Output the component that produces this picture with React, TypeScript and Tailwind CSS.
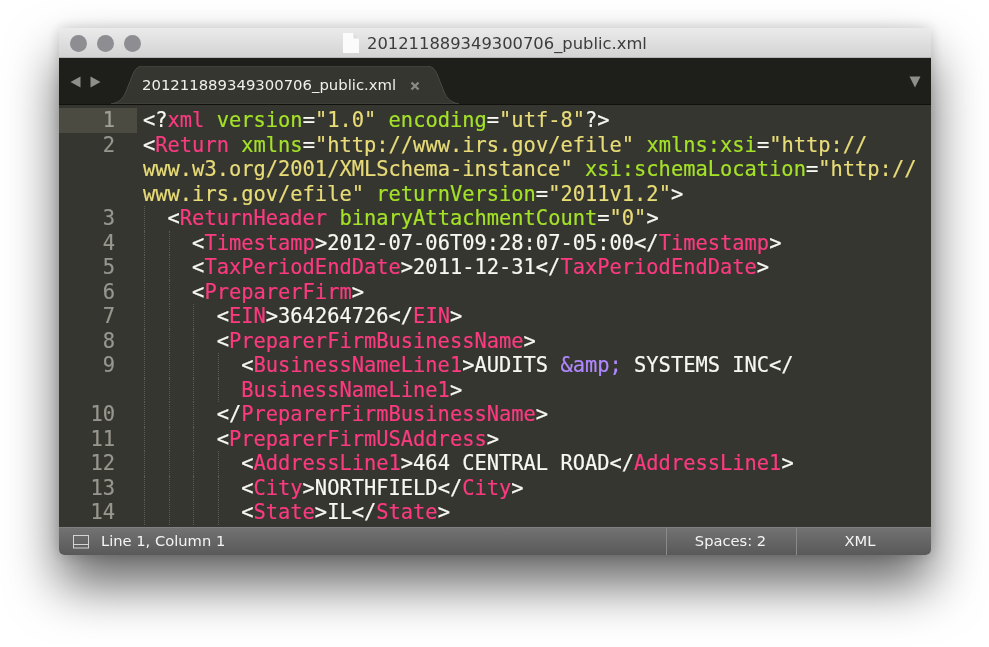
const mono = "font-['DejaVu_Sans_Mono',monospace]";

type Tok = [string, string?];

const P = "text-[#fb3a80]";
const G = "text-[#a4e228]";
const Y = "text-[#e8dc78]";
const V = "text-[#b088ff]";

function tag(name: string, close = false): Tok[] {
  return [[close ? "</" : "<"], [name, P], [">"]];
}

const rows: { n?: number; depth: number; guides: number; toks: Tok[] }[] = [
  { n: 1, depth: 0, guides: 0, toks: [["<?"], ["xml", P], [" "], ["version", G], ["="], ['"1.0"', Y], [" "], ["encoding", G], ["="], ['"utf-8"', Y], ["?>"]] },
  { n: 2, depth: 0, guides: 0, toks: [["<"], ["Return", P], [" "], ["xmlns", G], ["="], ['"http://www.irs.gov/efile"', Y], [" "], ["xmlns:xsi", G], ["="], ['"http://', Y]] },
  { depth: 0, guides: 0, toks: [["www.w3.org/2001/XMLSchema-instance\"", Y], [" "], ["xsi:schemaLocation", G], ["="], ['"http://', Y]] },
  { depth: 0, guides: 0, toks: [['www.irs.gov/efile"', Y], [" "], ["returnVersion", G], ["="], ['"2011v1.2"', Y], [">"]] },
  { n: 3, depth: 1, guides: 1, toks: [["<"], ["ReturnHeader", P], [" "], ["binaryAttachmentCount", G], ["="], ['"0"', Y], [">"]] },
  { n: 4, depth: 2, guides: 2, toks: [...tag("Timestamp"), ["2012-07-06T09:28:07-05:00"], ...tag("Timestamp", true)] },
  { n: 5, depth: 2, guides: 2, toks: [...tag("TaxPeriodEndDate"), ["2011-12-31"], ...tag("TaxPeriodEndDate", true)] },
  { n: 6, depth: 2, guides: 2, toks: tag("PreparerFirm") },
  { n: 7, depth: 3, guides: 3, toks: [...tag("EIN"), ["364264726"], ...tag("EIN", true)] },
  { n: 8, depth: 3, guides: 3, toks: tag("PreparerFirmBusinessName") },
  { n: 9, depth: 4, guides: 4, toks: [["<"], ["BusinessNameLine1", P], [">AUDITS "], ["&amp;", V], [" SYSTEMS INC</"]] },
  { depth: 4, guides: 4, toks: [["BusinessNameLine1", P], [">"]] },
  { n: 10, depth: 3, guides: 3, toks: tag("PreparerFirmBusinessName", true) },
  { n: 11, depth: 3, guides: 3, toks: tag("PreparerFirmUSAddress") },
  { n: 12, depth: 4, guides: 4, toks: [...tag("AddressLine1"), ["464 CENTRAL ROAD"], ...tag("AddressLine1", true)] },
  { n: 13, depth: 4, guides: 4, toks: [...tag("City"), ["NORTHFIELD"], ...tag("City", true)] },
  { n: 14, depth: 4, guides: 4, toks: [...tag("State"), ["IL"], ...tag("State", true)] },
];

function Row({ row }: { row: (typeof rows)[number] }) {
  const active = row.n === 1;
  return (
    <div className="flex h-[24.5px] leading-[24.5px] shrink-0">
      <div className={`w-[78px] shrink-0 pr-[22px] text-right ${active ? "bg-[#4b4b41] text-[#a0a098]" : "text-[#97978f]"}`}>
        {row.n}
      </div>
      <div className="w-[6px] shrink-0" />
      <div className="flex">
        {Array.from({ length: row.depth }).map((_, i) => (
          <span key={i} className="w-[24.56px] h-full shrink-0 pl-px">
            {i < row.guides && <span className="block h-full border-l border-dotted border-[#5c5c54]" />}
          </span>
        ))}
        <span className="whitespace-pre text-[#f8f8f2]">
          {row.toks.map(([t, c], i) => (
            <span key={i} className={c}>{t}</span>
          ))}
        </span>
      </div>
    </div>
  );
}

export default function App() {
  return (
    <div className="w-[989px] h-[647px] bg-white overflow-hidden pt-[28px] pl-[59px]">
      <div className="w-[872px] h-[527px] flex flex-col rounded-[5px] overflow-hidden blur-[0.35px] shadow-[0_30px_52px_rgba(0,0,0,0.6),0_0_14px_rgba(0,0,0,0.18)]">
        {/* title bar */}
        <div className="h-[30px] shrink-0 flex items-center pl-[11px] pt-[2px] bg-gradient-to-b from-[#ebebeb] to-[#d3d3d3] border-b border-[#b5b5b5]">
          <div className="flex gap-[10px] -mt-[1px]">
            <span className="w-[17px] h-[17px] rounded-full bg-[#8e8e92]" />
            <span className="w-[17px] h-[17px] rounded-full bg-[#8e8e92]" />
            <span className="w-[17px] h-[17px] rounded-full bg-[#8e8e92]" />
          </div>
          <svg width="16" height="20" viewBox="0 0 16 20" className="ml-[202px] shrink-0 -mt-[1px]">
            <path d="M0 0H10.5L16 5.5V20H0Z" fill="#fbfbfb" />
            <path d="M10.5 0V5.5H16Z" fill="#dddddd" />
          </svg>
          <span className="ml-[8px] mt-[2px] font-['DejaVu_Sans',sans-serif] text-[16.35px] text-[#3c3c3c] whitespace-nowrap">
            201211889349300706_public.xml
          </span>
        </div>

        {/* tab bar */}
        <div className="h-[47px] shrink-0 flex items-end bg-[#1e1f1a] border-b border-[#11110e]">
          <div className="w-[52px] h-full shrink-0 flex items-center pl-[11px] pt-[2px] gap-[9px] text-[#8f8f8a]">
            <svg width="11" height="12" viewBox="0 0 11 12"><path d="M10.5 0.5V11.5L0.5 6Z" fill="currentColor" /></svg>
            <svg width="11" height="12" viewBox="0 0 11 12"><path d="M0.5 0.5V11.5L10.5 6Z" fill="currentColor" /></svg>
          </div>
          <div className="relative w-[348px] h-[38px] shrink-0 flex items-center pl-[31px]">
            <svg width="348" height="38" viewBox="0 0 348 38" className="absolute inset-0">
              <path d="M0 38C10 36 13 31 16 23L22 8C24 3 27 0 33 0H315C321 0 324 3 326 8L332 23C335 31 338 36 348 38Z" fill="#363630" stroke="#4a4a44" />
            </svg>
            <span className="relative font-['DejaVu_Sans',sans-serif] text-[14.85px] text-[#f0f0ea] whitespace-nowrap">
              201211889349300706_public.xml
            </span>
            <svg width="10" height="10" viewBox="0 0 10 10" className="relative ml-[14px] mt-[1px]">
              <path d="M1.5 1.5L8.5 8.5M8.5 1.5L1.5 8.5" stroke="#8a8a85" strokeWidth="2.4" />
            </svg>
          </div>
          <div className="flex-1 h-full flex items-center justify-end pr-[10px] pt-[2px]">
            <svg width="12" height="12" viewBox="0 0 12 12"><path d="M0.5 0.5H11.5L6 11.5Z" fill="#8f8f8a" /></svg>
          </div>
        </div>

        {/* editor */}
        <div className={`flex-1 min-h-0 overflow-hidden bg-[#363630] pt-[3px] text-[20.4px] [-webkit-text-stroke:0.2px] ${mono}`}>
          {rows.map((row, i) => (
            <Row key={i} row={row} />
          ))}
        </div>

        {/* status bar */}
        <div className="h-[28px] shrink-0 flex items-center bg-gradient-to-b from-[#727272] to-[#595959] border-t border-[#808080] font-['DejaVu_Sans',sans-serif] text-[14.7px] text-[#f4f4f4]">
          <svg width="16" height="14" viewBox="0 0 16 14" className="ml-[14px] shrink-0" fill="none" stroke="#d4d4d4">
            <rect x="0.5" y="0.5" width="15" height="12.5" />
            <path d="M0.5 9.5H15.5" />
          </svg>
          <span className="ml-[12px] flex-1 whitespace-nowrap">Line 1, Column 1</span>
          <span className="w-[130px] h-full flex items-center justify-center pr-[2px] border-l border-[#8a8a8a]">Spaces: 2</span>
          <span className="w-[135px] h-full flex items-center justify-center pr-[8px] border-l border-[#8a8a8a]">XML</span>
        </div>
      </div>
    </div>
  );
}
